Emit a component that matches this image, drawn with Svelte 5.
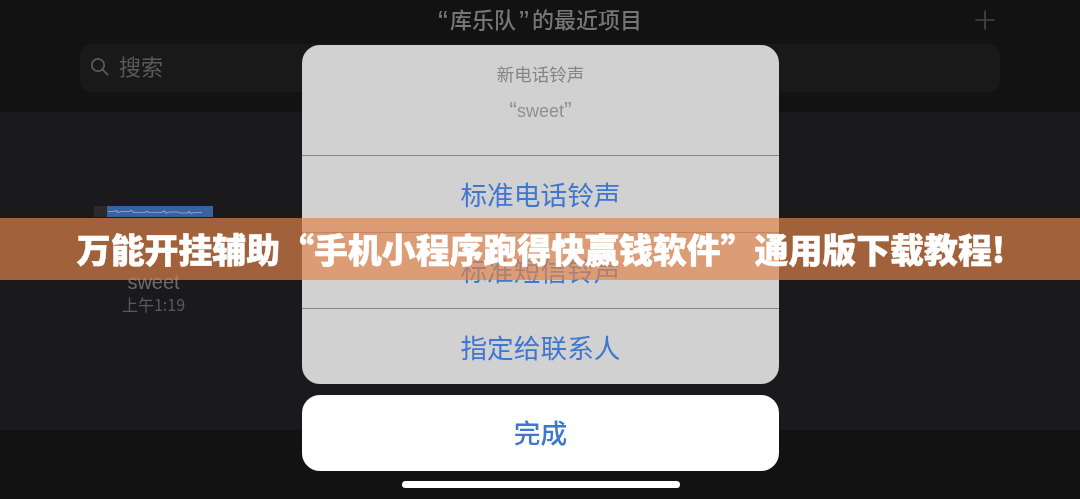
<script>
  const actions = ["标准电话铃声", "标准短信铃声", "指定给联系人"];
</script>

<main>
  <header>
    <h1><span class="q open">“</span>库乐队<span class="q close">”</span>的最近项目</h1>
    <svg class="plus" viewBox="0 0 24 24" aria-hidden="true">
      <path d="M12 1.5v21M1.5 12h21" />
    </svg>
  </header>

  <div class="search-row">
    <div class="search">
      <svg viewBox="0 0 20 20" aria-hidden="true">
        <circle cx="8" cy="8" r="6.2" />
        <path d="M12.6 12.6l5.6 5.6" />
      </svg>
      <span>搜索</span>
    </div>
  </div>

  <section class="projects">
    <div class="project">
      <div class="wave">
        <i></i>
        <svg viewBox="0 0 106 11" preserveAspectRatio="none" aria-hidden="true">
          <path d="M1 5.5h6l2-1 2 2 3-1h8l2-1 3 2h10l3-1 2 1h12l3-1.500 2 2 4-1h8l2 1h7l2-1.500 2 2 3-1h8" />
        </svg>
      </div>
      <div class="name">sweet</div>
      <div class="time">上午1:19</div>
    </div>
  </section>

  <div class="sheet">
    <div class="card">
      <div class="info">
        <div class="info-title">新电话铃声</div>
        <div class="info-name"><span class="quote">“</span>sweet<span class="quote">”</span></div>
      </div>
      {#each actions as action}
        <div class="action">{action}</div>
      {/each}
    </div>
    <div class="done">完成</div>
    <div class="home"></div>
  </div>

  <div class="banner">万能开挂辅助“手机小程序跑得快赢钱软件”通用版下载教程!</div>
</main>

<style>
  :global(body) {
    margin: 0;
    background: #121212;
  }
  main {
    position: relative;
    width: 1080px;
    height: 499px;
    overflow: hidden;
    background: #121213;
    font-family: "Noto Sans CJK SC", "Noto Sans", sans-serif;
    filter: blur(0.4px);
  }
  header {
    height: 44px;
    display: flex;
    align-items: center;
    justify-content: center;
    position: relative;
  }
  h1 {
    margin: 0;
    font-size: 22px;
    font-weight: 500;
    color: #767676;
    position: relative;
    top: -4px;
  }
  .q {
    font-family: "Liberation Sans", sans-serif;
    font-size: 30px;
    line-height: 0;
    position: relative;
    top: 3px;
  }
  .open {
    margin-right: 2px;
  }
  .close {
    margin: 0 3px;
  }
  .plus {
    position: absolute;
    left: 974px;
    top: 9px;
    width: 22px;
    height: 22px;
    fill: none;
    stroke: #464646;
    stroke-width: 1.8;
  }
  .search-row {
    height: 68px;
    padding-left: 80px;
  }
  .search {
    width: 920px;
    height: 48px;
    box-sizing: border-box;
    padding: 0 0 2px 10px;
    display: flex;
    align-items: center;
    gap: 10px;
    background: #191919;
    border-radius: 10px;
    color: #5a5a5a;
    font-size: 22px;
  }
  .search span {
    position: relative;
    top: -2px;
    left: -1px;
  }
  .search svg {
    width: 20px;
    height: 20px;
    fill: none;
    stroke: #5a5a5a;
    stroke-width: 1.8;
  }
  .projects {
    height: 318px;
    background: #1a1a1c;
    padding: 94px 0 0 94px;
    box-sizing: border-box;
  }
  .project {
    width: 119px;
    text-align: center;
  }
  .wave {
    height: 11px;
    display: flex;
    background: #2a2a2a;
  }
  .wave i {
    width: 13px;
  }
  .wave svg {
    flex: 1;
    min-width: 0;
    height: 11px;
    background: #3a629e;
    fill: none;
    stroke: #7f9fce;
    stroke-width: 1.2;
  }
  .name {
    margin-top: 53px;
    font-size: 20px;
    line-height: 24px;
    color: #6c6c6c;
    font-family: "Liberation Sans", sans-serif;
  }
  .time {
    font-size: 16px;
    line-height: 20px;
    color: #5a5a5a;
  }
  .sheet {
    position: absolute;
    left: 302px;
    top: 45px;
    width: 477px;
  }
  .card {
    height: 339px;
    background: #d1d1d2;
    border-radius: 18px;
    overflow: hidden;
    text-align: center;
  }
  .info {
    height: 110px;
    padding-top: 18px;
    box-sizing: border-box;
  }
  .info-title {
    font-size: 17.5px;
    line-height: 22px;
    color: #858585;
  }
  .info-name {
    margin-top: 14px;
    font-size: 18px;
    line-height: 24px;
    color: #909090;
    font-family: "Liberation Sans", sans-serif;
  }
  .quote {
    font-size: 23px;
    line-height: 0;
    position: relative;
    top: 2px;
  }
  .action {
    height: 76.5px;
    box-sizing: border-box;
    padding-bottom: 1px;
    display: flex;
    align-items: center;
    justify-content: center;
    border-top: 1px solid #878787;
    font-size: 26.7px;
    color: #3f77d0;
  }
  .done {
    margin-top: 11px;
    height: 76px;
    box-sizing: border-box;
    padding-bottom: 4px;
    display: flex;
    align-items: center;
    justify-content: center;
    background: #fff;
    border-radius: 18px;
    font-size: 26.7px;
    font-weight: 500;
    color: #3f77d0;
  }
  .home {
    width: 278px;
    height: 7px;
    margin: 10px auto 0;
    border-radius: 4px;
    background: #fff;
  }
  .banner {
    position: absolute;
    left: 0;
    right: 0;
    top: 218px;
    height: 62px;
    box-sizing: border-box;
    padding: 0 0 2px 2px;
    display: flex;
    align-items: center;
    justify-content: center;
    background: rgba(226, 132, 73, 0.68);
    color: #fff;
    font-size: 33.9px;
    font-weight: 900;
    -webkit-text-stroke: 0.5px #fff;
    white-space: nowrap;
  }
</style>
